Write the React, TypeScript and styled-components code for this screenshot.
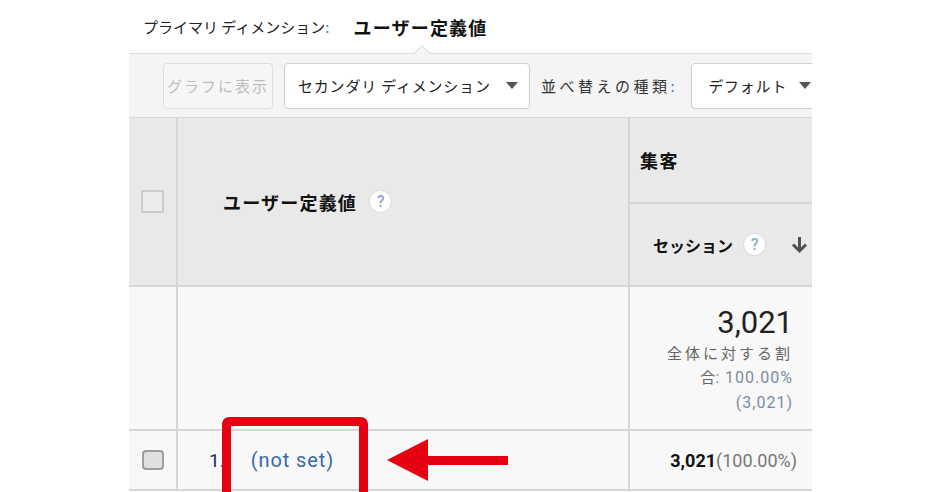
import React from 'react';
import styled, { createGlobalStyle } from 'styled-components';

const GlobalStyle = createGlobalStyle`
  html, body {
    margin: 0;
    padding: 0;
    background: #ffffff;
  }
  body {
    font-family: "Noto Sans CJK JP", Roboto, "Liberation Sans", sans-serif;
    color: #222;
  }
`;

const Page = styled.div`
  position: relative;
  width: 940px;
  height: 492px;
  overflow: hidden;
  padding-left: 129px;
  box-sizing: border-box;
`;

const Frame = styled.div`
  width: 683px;
  overflow: hidden;
`;

const TitleRow = styled.div`
  height: 53px;
  display: flex;
  align-items: center;
  padding-left: 14px;
  font-size: 15px;
  color: #222;
  white-space: nowrap;
`;

const Colon = styled.span<{ $gap?: number }>`
  color: #4a7fc1;
  margin-right: ${(p) => p.$gap ?? 0}px;
`;

const Strong = styled.span<{ $size?: number; $spacing?: number }>`
  font-weight: 700;
  font-size: ${(p) => p.$size ?? 17}px;
  letter-spacing: ${(p) => p.$spacing ?? 2}px;
  color: #111;
`;

const Toolbar = styled.div`
  position: relative;
  height: 63px;
  border-top: 1px solid #dcdcdc;
  border-bottom: 1px solid #d8d8d8;
  background: #f4f4f4;
  display: flex;
  align-items: center;
  gap: 11px;
  padding-left: 34px;
  font-size: 15px;
  white-space: nowrap;
`;

const Notch = styled.div`
  position: absolute;
  left: 284px;
  top: -9px;
  width: 0;
  height: 0;
  border-left: 9px solid transparent;
  border-right: 9px solid transparent;
  border-bottom: 9px solid #d4d4d4;
  &::after {
    content: '';
    position: absolute;
    left: -8px;
    top: 1px;
    border-left: 8px solid transparent;
    border-right: 8px solid transparent;
    border-bottom: 8px solid #f4f4f4;
  }
`;

const GhostButton = styled.div`
  height: 46px;
  width: 110px;
  flex-shrink: 0;
  box-sizing: border-box;
  border: 1px solid #dedede;
  border-radius: 4px;
  background: #f6f6f6;
  color: #bdbdbd;
  display: flex;
  align-items: center;
  justify-content: center;
  letter-spacing: 2px;
`;

const Select = styled.div<{ $width: number; $padLeft?: number }>`
  height: 46px;
  width: ${(p) => p.$width}px;
  flex-shrink: 0;
  box-sizing: border-box;
  border: 1px solid #cfcfcf;
  border-radius: 4px;
  background: #ffffff;
  display: flex;
  align-items: center;
  justify-content: space-between;
  padding: 0 11px 0 ${(p) => p.$padLeft ?? 13}px;
  color: #222;
  letter-spacing: 0.8px;
`;

const Caret = styled.span`
  width: 0;
  height: 0;
  border-left: 6px solid transparent;
  border-right: 6px solid transparent;
  border-top: 7px solid #555;
`;

const Label = styled.span`
  flex-shrink: 0;
  color: #333;
  letter-spacing: 3.5px;
  margin-right: 2px;
`;

const Table = styled.table`
  border-collapse: collapse;
  table-layout: fixed;
  width: 683px;
`;

const Th = styled.th<{ $pad?: string; $height?: number }>`
  background: #e9e9e9;
  border: 2px solid #d6d6d6;
  border-top: none;
  text-align: left;
  font-weight: 700;
  padding: ${(p) => p.$pad ?? '0'};
  height: ${(p) => p.$height ?? 0}px;
  vertical-align: middle;
  white-space: nowrap;
  &:first-child {
    border-left: none;
  }
  &:last-child {
    border-right: none;
  }
`;

const Td = styled.td<{ $align?: string; $valign?: string; $pad?: string; $height?: number }>`
  background: #f8f8f8;
  border: 2px solid #d6d6d6;
  text-align: ${(p) => p.$align ?? 'left'};
  vertical-align: ${(p) => p.$valign ?? 'middle'};
  padding: ${(p) => p.$pad ?? '0'};
  height: ${(p) => p.$height ?? 0}px;
  white-space: nowrap;
  &:first-child {
    border-left: none;
  }
  &:last-child {
    border-right: none;
  }
`;

const HeaderBox = styled.div`
  width: 19px;
  height: 19px;
  margin: 0 auto;
  border: 2px solid #cbcbcb;
  background: #ececec;
`;

const RowBox = styled.div`
  width: 18px;
  height: 16px;
  margin: 0 auto;
  border: 2px solid #9d9d9d;
  border-radius: 4px;
  background: #e0e0e0;
`;

const HeadLine = styled.div`
  display: flex;
  align-items: center;
`;

const Help = styled.span<{ $left: number }>`
  width: 23px;
  height: 23px;
  margin-left: ${(p) => p.$left}px;
  border-radius: 50%;
  border: 1px solid #dcdcdc;
  background: #ffffff;
  color: #8ea8cc;
  font-family: Roboto, "Liberation Sans", sans-serif;
  font-size: 16px;
  font-weight: 500;
  letter-spacing: 0;
  display: inline-flex;
  align-items: center;
  justify-content: center;
  box-sizing: border-box;
`;

const BigNumber = styled.div`
  font-family: Roboto, "Liberation Sans", sans-serif;
  font-size: 31px;
  line-height: 36px;
  color: #222;
`;

const Note = styled.div<{ $spacing?: number }>`
  font-size: 15px;
  line-height: 24px;
  color: #666;
  letter-spacing: ${(p) => p.$spacing ?? 0}px;
`;

const Pale = styled.span`
  font-family: Roboto, "Liberation Sans", sans-serif;
  font-size: 16px;
  color: #7d8ca3;
  letter-spacing: 1px;
`;

const Index = styled.span`
  font-family: Roboto, "Liberation Sans", sans-serif;
  font-size: 19px;
  color: #1f2d57;
  margin-left: 31px;
  margin-right: 26px;
`;

const DimLink = styled.span`
  font-family: Roboto, "Liberation Sans", sans-serif;
  font-size: 20px;
  letter-spacing: 0.9px;
  color: #3a69a7;
`;

const Metric = styled.span`
  font-family: Roboto, "Liberation Sans", sans-serif;
  font-size: 18px;
  font-weight: 700;
  color: #111;
`;

const MetricPct = styled.span`
  font-family: Roboto, "Liberation Sans", sans-serif;
  font-size: 18px;
  color: #777;
`;

const Highlight = styled.div`
  position: absolute;
  left: 222px;
  top: 417px;
  width: 146px;
  height: 90px;
  box-sizing: border-box;
  border: 9px solid #e50012;
  border-radius: 7px;
`;

const Pointer = styled.svg`
  position: absolute;
  left: 387px;
  top: 439px;
`;

const SortArrow = () => (
  <svg width="19" height="19" viewBox="0 0 19 19" style={{ marginLeft: 24 }}>
    <path d="M9.5 2 V15.5 M3 9.5 L9.5 16 L16 9.5" stroke="#4f4f4f" strokeWidth="3" fill="none" />
  </svg>
);

export default function App() {
  return (
    <>
      <GlobalStyle />
      <Page>
        <Frame>
          <TitleRow>
            <span>プライマリ ディメンション</span>
            <Colon $gap={24}>:</Colon>
            <Strong $size={18} $spacing={1.2}>ユーザー定義値</Strong>
          </TitleRow>

          <Toolbar>
            <Notch />
            <GhostButton>グラフに表示</GhostButton>
            <Select $width={246}>
              <span>セカンダリ ディメンション</span>
              <Caret />
            </Select>
            <Label>
              並べ替えの種類<Colon>:</Colon>
            </Label>
            <Select $width={132} $padLeft={16}>
              <span>デフォルト</span>
              <Caret />
            </Select>
          </Toolbar>

          <Table>
            <colgroup>
              <col style={{ width: 48 }} />
              <col style={{ width: 452 }} />
              <col style={{ width: 183 }} />
            </colgroup>
            <thead>
              <tr>
                <Th rowSpan={2}>
                  <HeaderBox />
                </Th>
                <Th rowSpan={2} $pad="0 0 0 45px">
                  <HeadLine>
                    <Strong $size={18} $spacing={1.2}>ユーザー定義値</Strong>
                    <Help $left={12}>?</Help>
                  </HeadLine>
                </Th>
                <Th $pad="0 0 0 10px" $height={84}>
                  <Strong $size={18} $spacing={1.5}>集客</Strong>
                </Th>
              </tr>
              <tr>
                <Th $pad="0 0 0 23px" $height={81}>
                  <HeadLine>
                    <Strong $size={16} $spacing={0}>セッション</Strong>
                    <Help $left={10}>?</Help>
                    <SortArrow />
                  </HeadLine>
                </Th>
              </tr>
            </thead>
            <tbody>
              <tr>
                <Td $height={105} />
                <Td />
                <Td $align="right" $valign="top" $pad="18px 19px 14px 0">
                  <BigNumber>3,021</BigNumber>
                  <Note $spacing={3}>全体に対する割</Note>
                  <Note>
                    合<Pale>: 100.00%</Pale>
                  </Note>
                  <Note>
                    <Pale>(3,021)</Pale>
                  </Note>
                </Td>
              </tr>
              <tr>
                <Td $height={58}>
                  <RowBox />
                </Td>
                <Td>
                  <Index>1.</Index>
                  <DimLink>(not set)</DimLink>
                </Td>
                <Td $align="right" $pad="0 15px 0 0">
                  <Metric>3,021</Metric>
                  <MetricPct>(100.00%)</MetricPct>
                </Td>
              </tr>
            </tbody>
          </Table>
        </Frame>

        <Highlight />
        <Pointer width="122" height="44" viewBox="0 0 122 44">
          <polygon points="0,21 41,0 41,17 121,17 121,26 41,26 41,42" fill="#e50012" />
        </Pointer>
      </Page>
    </>
  );
}
